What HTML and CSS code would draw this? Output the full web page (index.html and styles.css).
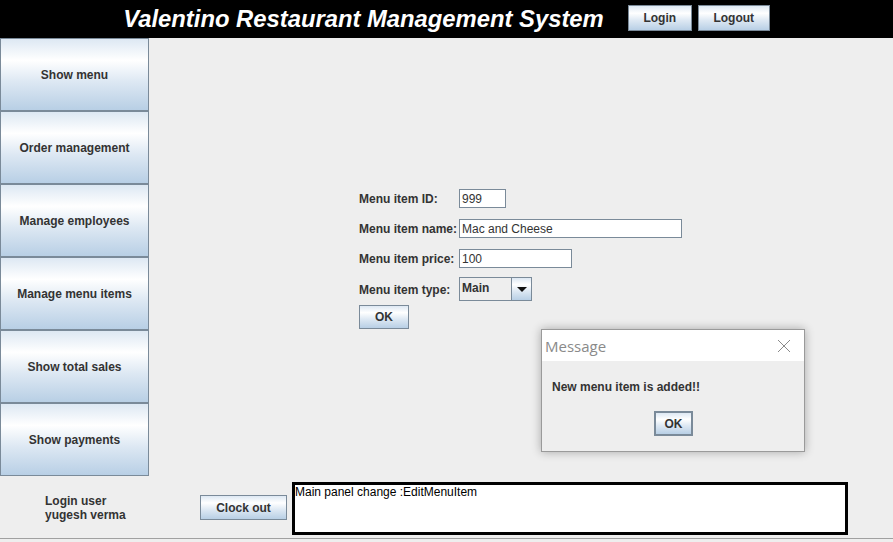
FILE: index.html
```html
<!DOCTYPE html>
<html>
<head>
<meta charset="utf-8">
<link rel="stylesheet" href="styles.css">
</head>
<body>
<div class="app">
  <header class="header">
    <h1 class="title">Valentino Restaurant Management System</h1>
    <div class="head-buttons">
      <button class="btn head-btn login">Login</button>
      <button class="btn head-btn logout">Logout</button>
    </div>
  </header>
  <div class="main">
    <nav class="sidebar">
      <button class="btn side-btn">Show menu</button>
      <button class="btn side-btn">Order management</button>
      <button class="btn side-btn">Manage employees</button>
      <button class="btn side-btn">Manage menu items</button>
      <button class="btn side-btn">Show total sales</button>
      <button class="btn side-btn">Show payments</button>
    </nav>
    <section class="content">
      <div class="form">
        <div class="row row-id">
          <span class="label">Menu item ID:</span>
          <div class="field f-id">999</div>
        </div>
        <div class="row row-name">
          <span class="label">Menu item name:</span>
          <div class="field f-name">Mac and Cheese</div>
        </div>
        <div class="row row-price">
          <span class="label">Menu item price:</span>
          <div class="field f-price">100</div>
        </div>
        <div class="row row-type">
          <span class="label">Menu item type:</span>
          <div class="combo">
            <span class="combo-value">Main</span>
            <span class="combo-arrow"><span class="tri"></span></span>
          </div>
        </div>
        <button class="btn ok-btn">OK</button>
      </div>
    </section>
  </div>
  <footer class="footer">
    <div class="user">
      <div>Login user</div>
      <div>yugesh verma</div>
    </div>
    <button class="btn clock-btn">Clock out</button>
    <div class="log">Main panel change :EditMenuItem</div>
  </footer>
  <div class="dialog">
    <div class="dialog-title">
      <span class="dialog-name">Message</span>
      <svg class="close" width="14" height="14" viewBox="0 0 14 14"><path d="M1 1 L13 13 M13 1 L1 13" stroke="#8a8a8a" stroke-width="1" fill="none"/></svg>
    </div>
    <div class="dialog-body">
      <div class="dialog-msg">New menu item is added!!</div>
      <button class="btn dialog-ok">OK</button>
    </div>
  </div>
</div>
</body>
</html>
```
FILE: styles.css
```css
html, body {
  margin: 0;
  padding: 0;
}
body {
  background: #eeeeee;
  font-family: "Liberation Sans", Arial, sans-serif;
  font-size: 12px;
  color: #333333;
}
.app {
  position: relative;
  width: 893px;
  height: 542px;
  overflow: hidden;
  background: #eeeeee;
}
.btn {
  box-sizing: border-box;
  font-family: "Liberation Sans", Arial, sans-serif;
  font-size: 12px;
  font-weight: bold;
  color: #333333;
  border: 1px solid #7a8a99;
  background: linear-gradient(to bottom, #dde8f3 0%, #ffffff 30%, #dde8f3 60%, #b8cfe5 100%);
  padding: 0;
  margin: 0;
  cursor: default;
}
.header {
  height: 38px;
  background: #000000;
  display: flex;
  align-items: center;
  justify-content: center;
  box-sizing: border-box;
}
.title {
  margin: 0 24px 0 0;
  color: #ffffff;
  font-family: "Liberation Sans", Arial, sans-serif;
  font-size: 23.8px;
  font-weight: bold;
  font-style: italic;
  line-height: 38px;
}
.head-buttons {
  display: flex;
  gap: 6px;
  align-self: flex-start;
  margin-top: 5px;
}
.head-btn {
  height: 26px;
}
.login { width: 64px; }
.logout { width: 72px; }
.main {
  display: flex;
  height: 438px;
}
.sidebar {
  width: 149px;
  display: flex;
  flex-direction: column;
}
.side-btn {
  height: 73px;
  width: 149px;
}
.content {
  flex: 1;
  box-sizing: border-box;
  padding-top: 151px;
  padding-left: 210px;
}
.form {
  display: flex;
  flex-direction: column;
}
.row {
  display: flex;
  align-items: center;
}
.row-name, .row-price { margin-top: 11px; }
.row-type { margin-top: 9px; }
.label {
  width: 100px;
  font-weight: bold;
  color: #333333;
  padding-top: 1px;
}
.field {
  box-sizing: border-box;
  height: 19px;
  background: #ffffff;
  border: 1px solid #7a8a99;
  padding-left: 2px;
  line-height: 19px;
  color: #333333;
}
.f-id { width: 47px; }
.f-name { width: 223px; }
.f-price { width: 113px; }
.combo {
  box-sizing: border-box;
  width: 73px;
  height: 24px;
  border: 1px solid #7a8a99;
  background: #eeeeee;
  display: flex;
}
.combo-value {
  flex: 1;
  font-weight: bold;
  padding-left: 2px;
  line-height: 21px;
  color: #333333;
}
.combo-arrow {
  width: 19px;
  border-left: 1px solid #7a8a99;
  background: linear-gradient(to bottom, #dde8f3 0%, #ffffff 30%, #dde8f3 60%, #b8cfe5 100%);
  display: flex;
  align-items: center;
  justify-content: center;
}
.tri {
  width: 0;
  height: 0;
  border-left: 5px solid transparent;
  border-right: 5px solid transparent;
  border-top: 5px solid #111111;
}
.ok-btn {
  margin-top: 4px;
  width: 50px;
  height: 24px;
}
.footer {
  height: 62px;
  display: flex;
  align-items: flex-start;
  border-bottom: 1px solid #a0a0a0;
}
.user {
  box-sizing: border-box;
  width: 200px;
  padding-left: 45px;
  padding-top: 18px;
  font-weight: bold;
  line-height: 14px;
  color: #333333;
}
.clock-btn {
  margin-top: 19px;
  width: 87px;
  height: 25px;
}
.log {
  box-sizing: border-box;
  margin-left: 5px;
  margin-top: 6px;
  width: 556px;
  height: 53px;
  border: 3px solid #000000;
  background: #ffffff;
  color: #000000;
  padding-left: 0px;
  line-height: 14px;
}
.dialog {
  position: absolute;
  left: 541px;
  top: 329px;
  width: 264px;
  height: 123px;
  box-sizing: border-box;
  border: 1px solid #9a9a9a;
  background: #eeeeee;
  box-shadow: 0 0 9px rgba(0, 0, 0, 0.3);
}
.dialog-title {
  height: 31px;
  background: #ffffff;
  display: flex;
  align-items: center;
  justify-content: space-between;
  padding: 0 13px 0 3px;
}
.dialog-name {
  font-family: "Open Sans", "Liberation Sans", sans-serif;
  font-size: 15px;
  color: #8a8a8a;
}
.dialog-body {
  display: flex;
  flex-direction: column;
  align-items: center;
}
.dialog-msg {
  align-self: flex-start;
  margin-left: 10px;
  margin-top: 19px;
  font-weight: bold;
  color: #333333;
}
.dialog-ok {
  margin-top: 17px;
  margin-left: 1px;
  width: 39px;
  height: 25px;
  border: 2px solid #7a8a99;
}
```
